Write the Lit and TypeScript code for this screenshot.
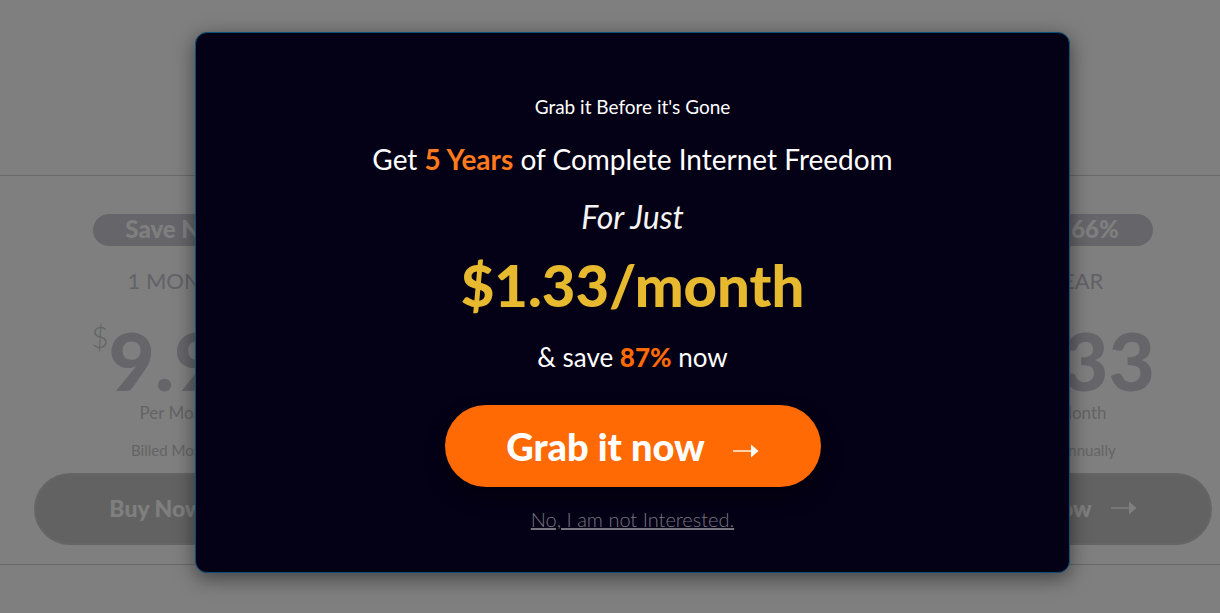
import { LitElement, html, css } from "lit";
import { customElement, property } from "lit/decorators.js";

const arrow = html`<svg class="arrow" viewBox="0 0 26 14" width="26" height="14" aria-hidden="true">
  <path d="M0 7H19" stroke="currentColor" stroke-width="1.8" opacity="0.75" />
  <path d="M18 0.5L25.5 7L18 13.5Z" fill="currentColor" />
</svg>`;

@customElement("plan-card")
class PlanCard extends LitElement {
  @property() save = "";
  @property() term = "";
  @property() price = "";
  @property() billed = "";

  static styles = css`
    :host {
      display: flex;
      flex-direction: column;
      align-items: center;
      width: 290px;
      color: #c9c9c9;
    }
    .pill {
      box-sizing: border-box;
      width: 172px;
      height: 32px;
      border-radius: 16px;
      background: #cacad5;
      color: #fff;
      font-size: 24px;
      font-weight: 900;
      line-height: 30px;
      white-space: nowrap;
      text-align: center;
    }
    .term {
      margin-top: 20px;
      color: #c4c4ce;
      font-size: 22px;
      font-weight: 400;
      line-height: 30px;
    }
    .price {
      display: flex;
      align-items: flex-start;
      margin-top: 24px;
      color: #cacad5;
    }
    .currency {
      color: #c9c9c9;
      font-size: 30px;
      font-weight: 300;
      line-height: 32px;
    }
    .amount {
      font-size: 80px;
      font-weight: 900;
      line-height: 80px;
    }
    .per {
      margin-top: 2px;
      font-size: 17px;
      line-height: 22px;
    }
    .billed {
      margin-top: 16px;
      font-size: 15px;
      line-height: 20px;
    }
    .buy {
      box-sizing: border-box;
      display: flex;
      align-items: center;
      justify-content: center;
      gap: 19px;
      width: 100%;
      height: 72px;
      margin-top: 13px;
      padding: 0 0 2px;
      border: 2px solid #cbcbcb;
      border-radius: 36px;
      background: #c5c5c5;
      color: #fff;
      font: 900 23px "Lato", sans-serif;
    }
  `;

  render() {
    return html`
      <div class="pill">${this.save}</div>
      <div class="term">${this.term}</div>
      <div class="price"><span class="currency">$</span><span class="amount">${this.price}</span></div>
      <div class="per">Per Month</div>
      <div class="billed">${this.billed}</div>
      <button class="buy" type="button">Buy Now ${arrow}</button>
    `;
  }
}

@customElement("app-root")
class AppRoot extends LitElement {
  static styles = css`
    :host {
      display: block;
      position: relative;
      min-height: 100vh;
      overflow: hidden;
      background: #fff;
      font-family: "Lato", sans-serif;
    }
    .page { padding-top: 175px; }
    .plans {
      display: flex;
      justify-content: space-between;
      padding: 38px 8px 19px 34px;
      border: solid #d2d2d2;
      border-width: 1px 0;
    }
    .overlay {
      position: absolute;
      inset: 0;
      display: flex;
      align-items: flex-start;
      justify-content: center;
      padding: 32px 0 0 45px;
      background: rgba(0, 0, 0, 0.5);
    }
    .modal {
      box-sizing: border-box;
      display: flex;
      flex-direction: column;
      align-items: center;
      width: 100%;
      max-width: 875px;
      padding: 60px 24px 40px;
      border: 1px solid #0b5078;
      border-radius: 12px;
      background: #040016;
      box-shadow: 0 5px 20px rgba(0, 0, 0, 0.5);
      color: #fff;
      text-align: center;
    }
    p, h2 { margin: 0; font-weight: 400; }
    .lead { font-size: 19px; line-height: 28px; }
    .title { margin-top: 20px; font-size: 28px; line-height: 36px; }
    .years { color: #ff7a1c; font-weight: 700; }
    .script {
      margin-top: 20px;
      color: #f4f4f4;
      font-size: 32px;
      font-style: italic;
      line-height: 40px;
    }
    .price {
      margin-top: 12px;
      color: #e6b92e;
      font-size: 58px;
      font-weight: 900;
      line-height: 72px;
    }
    .save { margin-top: 20px; font-size: 26px; line-height: 32px; }
    .percent { color: #ff6a05; font-weight: 900; }
    .grab {
      display: flex;
      align-items: center;
      justify-content: center;
      gap: 28px;
      width: 376px;
      height: 82px;
      margin-top: 32px;
      padding: 0;
      border: 0;
      border-radius: 41px;
      background: #ff6a05;
      box-shadow: 0 10px 20px rgba(0, 0, 0, 0.4);
      color: #fff;
      font: 900 38px "Lato", sans-serif;
    }
    .grab .arrow { margin-top: 10px; }
    .decline {
      margin-top: 20px;
      color: #77767f;
      font-size: 20px;
      font-weight: 300;
      line-height: 25px;
    }
  `;

  render() {
    return html`
      <main class="page">
        <section class="plans">
          <plan-card save="Save Now" term="1 MONTH" price="9.99" billed="Billed Monthly"></plan-card>
          <plan-card save="Save 66%" term="1 YEAR" price="3.33" billed="Billed Annually"></plan-card>
        </section>
      </main>
      <div class="overlay">
        <div class="modal" role="dialog" aria-modal="true" aria-labelledby="offer">
          <p class="lead">Grab it Before it's Gone</p>
          <h2 class="title" id="offer">Get <span class="years">5 Years</span> of Complete Internet Freedom</h2>
          <p class="script">For Just</p>
          <p class="price">$1.33/month</p>
          <p class="save">&amp; save <span class="percent">87%</span> now</p>
          <button class="grab" type="button">Grab it now ${arrow}</button>
          <a class="decline" href="#">No, I am not Interested.</a>
        </div>
      </div>
    `;
  }
}
